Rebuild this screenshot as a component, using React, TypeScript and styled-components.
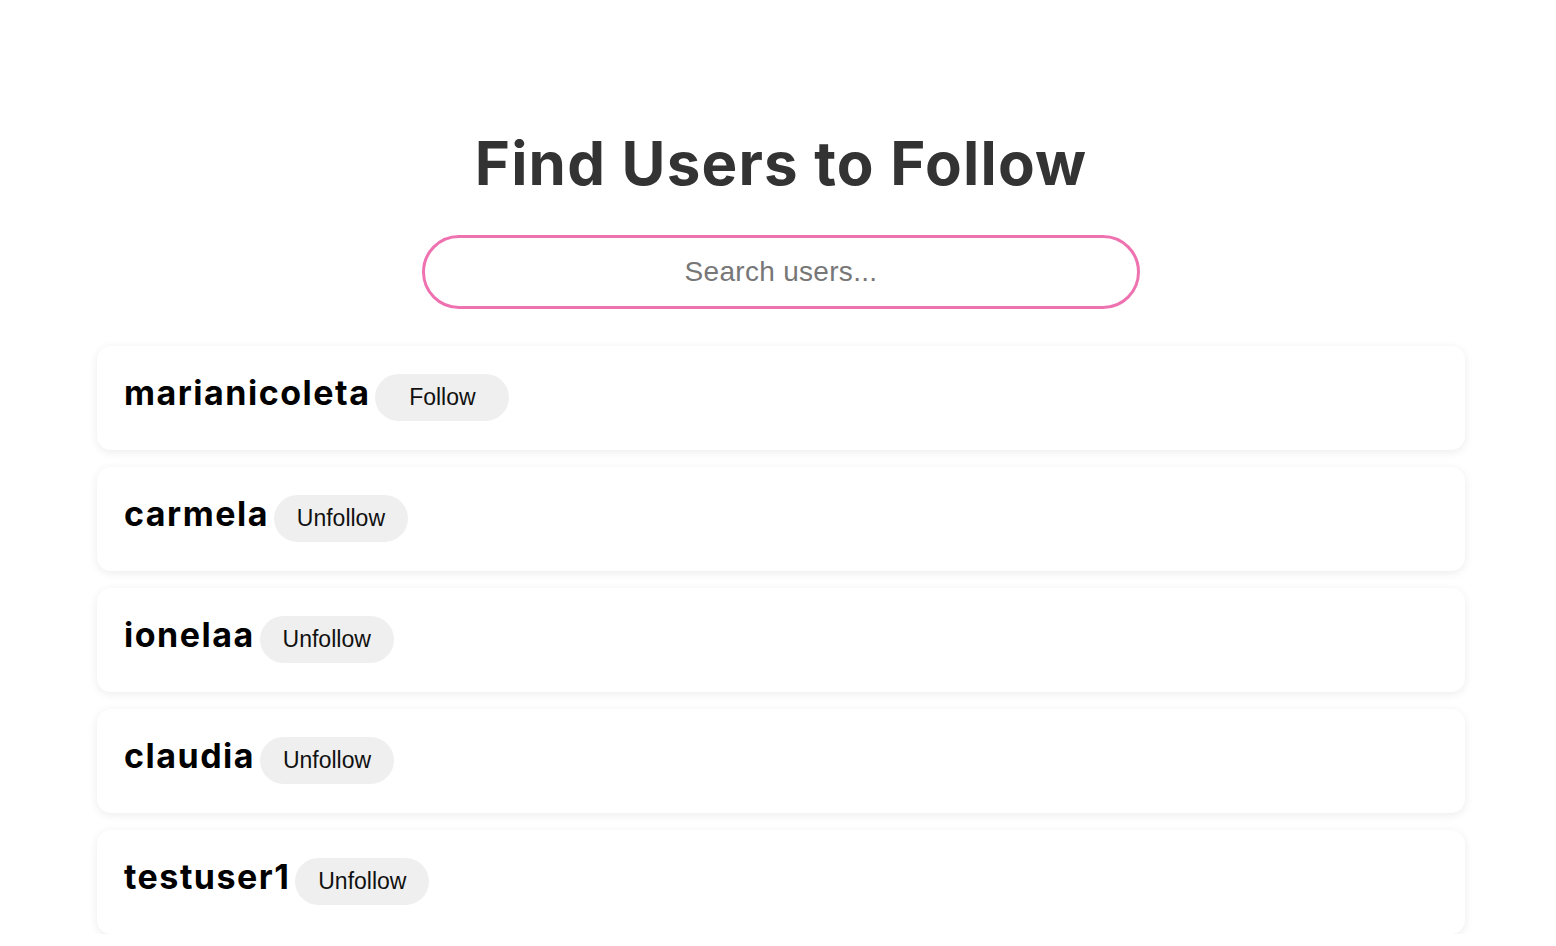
import React from "react";
import styled, { createGlobalStyle } from "styled-components";

const Global = createGlobalStyle`
  html, body { margin: 0; padding: 0; background: #ffffff; }
  body { font-family: "Liberation Sans", Arial, sans-serif; }
`;

const Page = styled.main`
  box-sizing: border-box;
  width: 100%;
  padding: 128px 0 0 6px;
  display: flex;
  flex-direction: column;
  align-items: center;
`;

const Title = styled.h1`
  margin: 0;
  font-family: "Inter", "Noto Sans", sans-serif;
  font-weight: 700;
  font-size: 60px;
  line-height: 70px;
  color: #333333;
  letter-spacing: 1.2px;
`;

const Search = styled.input`
  box-sizing: border-box;
  margin-top: 37px;
  width: 718px;
  height: 74px;
  border: 3px solid #ef72b0;
  border-radius: 37px;
  background: #ffffff;
  text-align: center;
  font-family: "Liberation Sans", Arial, sans-serif;
  font-size: 28px;
  letter-spacing: 0.3px;
  color: #333;
  outline: none;
  &::placeholder { color: #777777; }
`;

const List = styled.ul`
  list-style: none;
  margin: 37px 0 0;
  padding: 0;
  width: 1368px;
  display: flex;
  flex-direction: column;
  gap: 17px;
`;

const Card = styled.li`
  box-sizing: border-box;
  height: 104px;
  background: #ffffff;
  border-radius: 14px;
  box-shadow: 0 2px 10px rgba(0, 0, 0, 0.08);
  padding: 26px 27px 0;
  display: flex;
  align-items: baseline;
  gap: 5px;
`;

const Name = styled.span`
  font-family: "Inter", "Noto Sans", sans-serif;
  font-weight: 700;
  font-size: 34px;
  color: #000000;
  letter-spacing: 1.5px;
`;

const FollowButton = styled.button`
  border: none;
  background: #efefef;
  border-radius: 24px;
  width: 134px;
  height: 47px;
  padding: 0;
  font-family: "Liberation Sans", Arial, sans-serif;
  font-size: 23px;
  color: #111111;
  cursor: pointer;
`;

const users: { name: string; following: boolean }[] = [
  { name: "marianicoleta", following: false },
  { name: "carmela", following: true },
  { name: "ionelaa", following: true },
  { name: "claudia", following: true },
  { name: "testuser1", following: true },
];

export default function App() {
  return (
    <>
      <Global />
      <Page>
        <Title>Find Users to Follow</Title>
        <Search placeholder="Search users..." />
        <List>
          {users.map((u) => (
            <Card key={u.name}>
              <Name>{u.name}</Name>
              <FollowButton>{u.following ? "Unfollow" : "Follow"}</FollowButton>
            </Card>
          ))}
        </List>
      </Page>
    </>
  );
}
